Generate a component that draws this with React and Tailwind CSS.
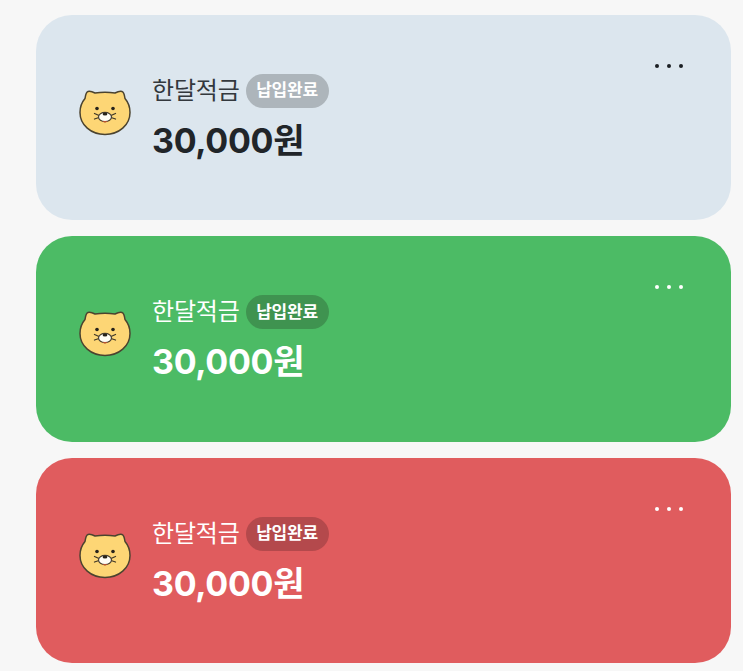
const cards = [
  { bg: "bg-[#dce6ee]", title: "text-[#33383d]", badge: "bg-[#adb5bb]", amount: "text-[#212529]", dot: "bg-[#1b1f23]" },
  { bg: "bg-[#4cbb65]", title: "text-white", badge: "bg-[#3f9350]", amount: "text-white", dot: "bg-white" },
  { bg: "bg-[#e05c5e]", title: "text-white", badge: "bg-[#b4494c]", amount: "text-white", dot: "bg-white" },
];

function Face() {
  return (
    <svg width="52" height="46" viewBox="0 0 52 46" className="shrink-0">
      <path
        d="M9 1.5 C11 1 14 2 16 3 C22 2.2 30 2.2 36 3 C38 2 41 1 43 1.5 C45 2 45.5 5 46 8.5 C49 12 51 17 51 22.5 C51 35 40 44.5 26 44.5 C12 44.5 1 35 1 22.5 C1 17 3 12 6 8.5 C6.5 5 7 2 9 1.5 Z"
        fill="#fdd675"
        stroke="#4b432f"
        strokeWidth="1.5"
      />
      <circle cx="18" cy="18.5" r="1.8" fill="#27231b" />
      <circle cx="34" cy="18.5" r="1.8" fill="#27231b" />
      <path d="M15.5 23.5 L20 25.5 M15.5 29 L20 27.5 M36.5 23.5 L32 25.5 M36.5 29 L32 27.5" stroke="#3f3727" strokeWidth="1.3" strokeLinecap="round" />
      <ellipse cx="26" cy="27" rx="6.5" ry="4.6" fill="#fffdf5" stroke="#4a4030" strokeWidth="1.2" />
      <ellipse cx="26" cy="24" rx="2.4" ry="1.5" fill="#27231b" />
      <path d="M23.5 31 Q26 34 28.5 31 Z" fill="#b9552f" />
    </svg>
  );
}

function Card({ c }) {
  return (
    <div className={`relative h-[205.3px] rounded-[36px] flex items-center pl-[43.5px] pb-[9px] ${c.bg}`}>
      <div className="flex items-center gap-[21px]">
        <Face />
        <div className="flex flex-col mt-[9px]">
          <div className="flex items-center gap-[6px]">
            <span className={`text-[24px] leading-[34px] tracking-[-0.2px] ${c.title}`}>한달적금</span>
            <span className={`h-[34px] w-[83px] rounded-full flex items-center justify-center text-[17px] font-semibold text-white tracking-[-0.2px] ${c.badge}`}>
              납입완료
            </span>
          </div>
          <div className={`mt-[13px] text-[34px] leading-[40px] font-bold tracking-[-0.3px] ${c.amount}`}>30,000원</div>
        </div>
      </div>
      <div className="absolute top-[49px] right-[48px] flex gap-[8px]">
        <span className={`w-[4px] h-[4px] rounded-full ${c.dot}`} />
        <span className={`w-[4px] h-[4px] rounded-full ${c.dot}`} />
        <span className={`w-[4px] h-[4px] rounded-full ${c.dot}`} />
      </div>
    </div>
  );
}

export default function App() {
  return (
    <div
      className="h-[671px] overflow-hidden bg-[#f7f7f7] pt-[15px] pl-[35.5px] pr-[12px] flex flex-col gap-[16px]"
      style={{ fontFamily: 'Inter, "Noto Sans CJK KR", sans-serif' }}
    >
      {cards.map((c, i) => (
        <Card key={i} c={c} />
      ))}
    </div>
  );
}
